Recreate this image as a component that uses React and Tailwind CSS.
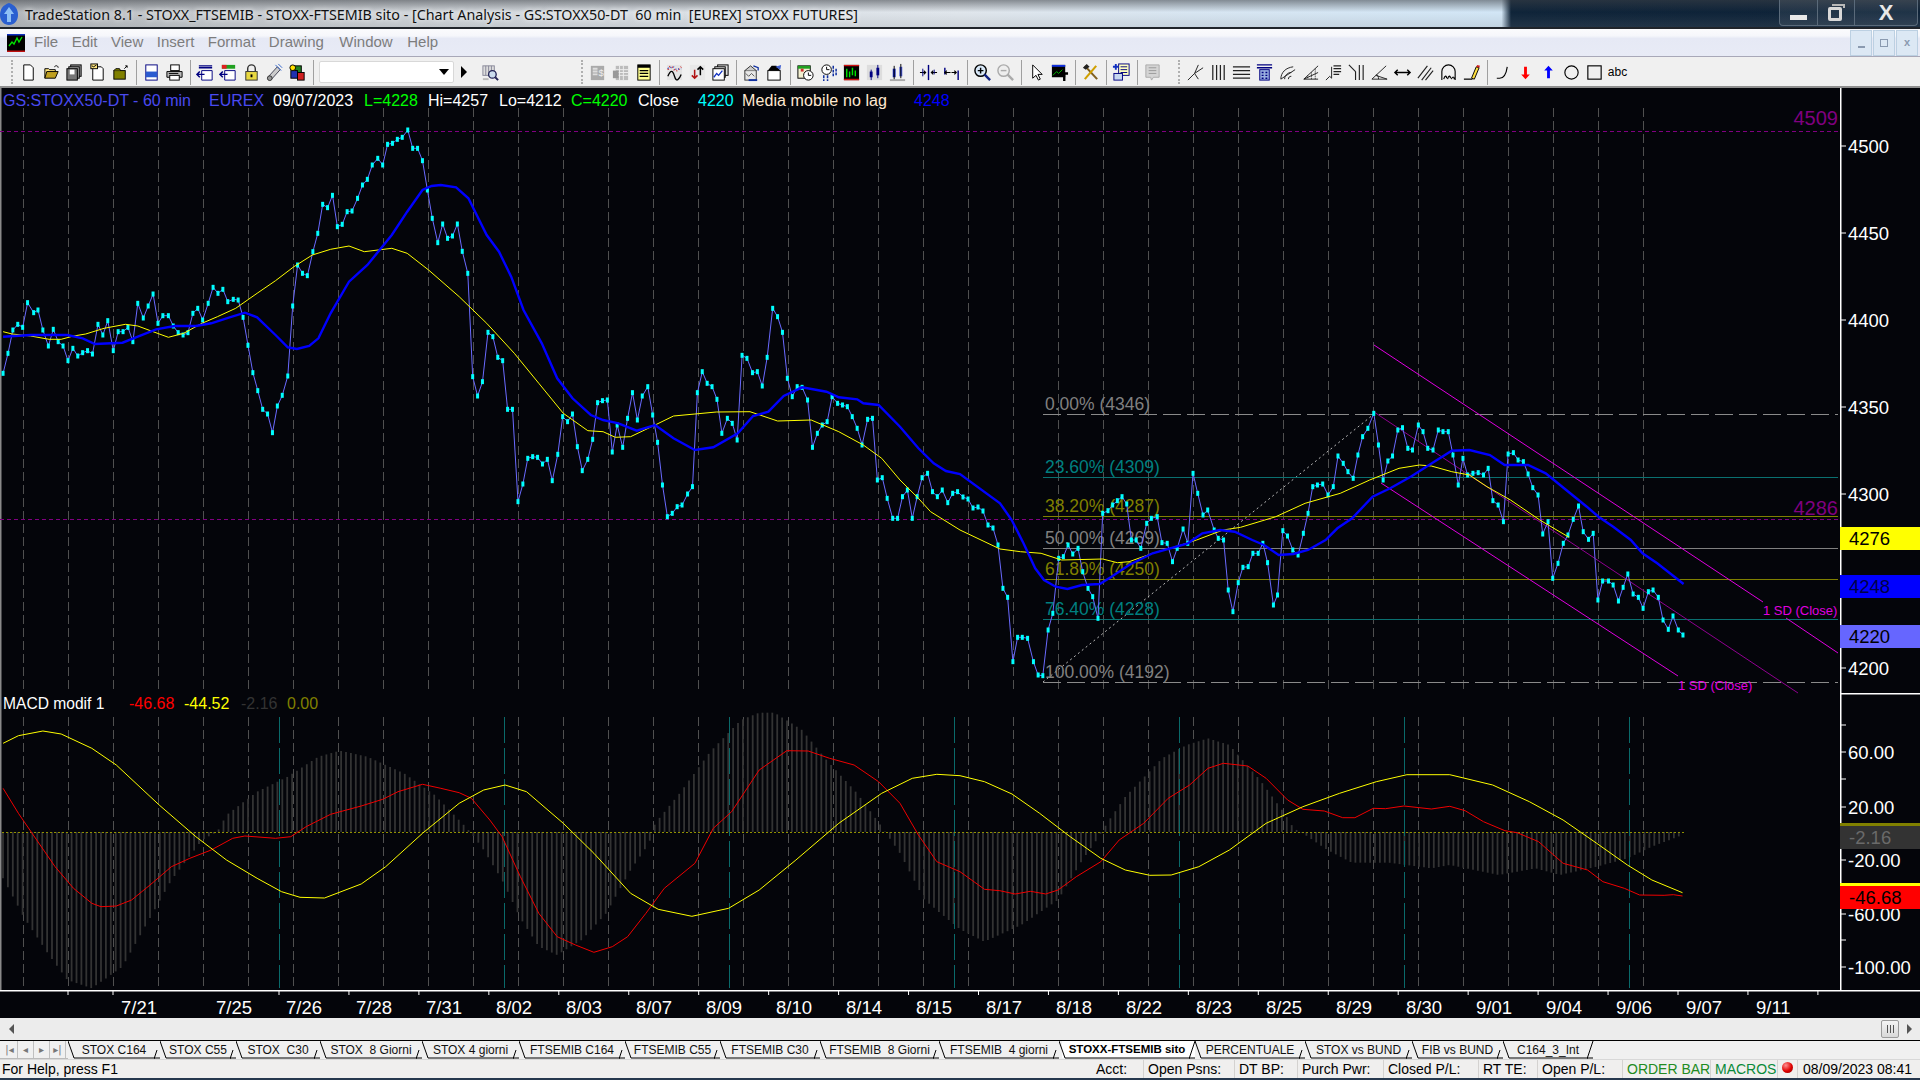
import React from "react";

const parse = (s, f) => s.trim().split(/\s+/).map((p) => f(...p.split(",").map(Number)));
const z10 = (x, y) => [x / 1.6333, 110 + y / 3];
const z7 = (x, y) => [1000 + x / 1.7043, 380 + y / 3];
const z8 = (x, y) => [x / 1.6333, 680 + y / 3];
const z9 = (x, y) => [960 + x / 1.6333, 680 + y / 3];
const raw = (x, y) => [x, y];
const pts = (a) => a.map((p) => p[0].toFixed(1) + "," + p[1].toFixed(1)).join(" ");

const price = [
  ...parse(`5,790 13,730 21,660 29,643 37,652 45,578 55,608 62,600 70,660 79,708 87,658 95,695 103,708 111,752 119,715 127,738 135,728 143,722 151,732 160,643 168,675 176,632 185,722 193,665 201,665 209,652 217,695 225,580 234,624 242,588 250,552 258,640 266,617 275,617 283,648 291,668 299,675 307,668 315,610 323,595 331,630 340,580 348,532 356,550 364,538 372,575 381,568 389,570 397,622 405,706 413,788 421,842 429,898 437,912 445,968 453,888 461,856 470,798 478,588 486,465 494,490 502,497 511,425 519,370 527,283 535,293 543,256 551,350 559,343 567,305 575,303 584,265 592,225 600,208 608,165 617,145 625,165 633,103 641,100 649,88 657,82 666,60 674,115 682,115 690,152 698,240 706,325 715,398 723,342 731,385 739,378 747,342 755,424 764,490 772,800 780,858 788,815 797,667 805,680 813,742 821,752 829,898 837,898 846,1175 854,1122 862,1045 870,1040 878,1042 886,1062 894,1048 902,1112 911,1033 919,920 927,935 935,912 943,1010 951,1082 960,1048 968,988 976,878 984,872 992,870 1000,1026 1008,945 1017,1012 1025,925 1033,848 1041,930 1049,858 1058,830 1066,915 1074,997 1082,1125 1090,1220 1098,1210 1106,1190 1114,1185 1123,1152 1131,1130 1139,848 1147,785 1155,820 1163,830 1171,868 1179,970 1188,925 1196,940 1204,990 1212,736 1220,745 1229,788 1237,785 1245,828 1253,742 1262,595 1270,620 1278,667 1286,805 1294,860 1302,830 1310,832 1319,870 1327,1012 1335,970 1343,945 1351,935 1359,860 1368,880 1376,885 1384,890 1392,920 1400,955 1408,1005 1417,928 1425,925 1433,1110 1441,1103 1449,1165 1458,1225 1466,1225 1474,1160 1482,1140 1490,1225 1498,1160 1506,1103 1515,1090 1523,1145 1531,1160 1539,1140 1548,1178 1556,1150 1564,1145`, z10),
  ...parse(`963,497 968,499 973,508 978,507 983,511 988,525 993,528 998,545`, raw),
  ...parse(`5,625 13,652 22,845 30,772 38,772 47,775 57,845 65,885 73,887 82,750 90,700 100,535 108,530 116,495 124,522 133,505 141,575 150,625 158,650 167,715 175,400 184,392 192,375 200,362 208,350 216,372 224,480 232,480 240,505 250,430 258,415 268,410 276,488 285,490 294,545 302,505 312,447 320,490 329,280 337,340 346,405 354,390 365,450 372,475 381,480 389,630 397,695 406,608 414,562 423,560 431,520 440,520 448,490 456,548 466,675 473,645 482,452 490,468 499,510 508,525 517,460 525,400 533,320 541,315 550,312 559,345 568,320 576,228 585,250 593,275 602,295 610,225 618,170 627,145 637,100 645,195 653,300 661,243 669,228 678,150 686,143 695,205 703,210 713,135 721,155 729,205 738,210 747,150 755,155 764,155 772,225 781,315 789,235 797,285 806,280 815,278 824,285 832,265 840,362 849,375 858,425 866,222 875,218 883,240 892,245 900,282 908,323 917,345 925,462 934,425 942,595 951,550 960,490 968,465 977,418 986,378 994,455 1003,478 1011,460 1019,660 1027,603 1037,603 1045,615 1054,663 1062,622 1070,582 1079,642 1088,652 1096,685 1105,635 1113,630 1122,652 1130,720 1139,748 1147,708 1156,750 1164,765`, z7),
];
const blue = [
  ...parse(`5,680 50,675 110,675 135,685 155,702 200,698 225,680 255,658 285,648 320,648 345,640 375,622 400,608 420,622 450,675 470,712 485,717 505,708 520,685 540,610 570,515 600,465 640,375 665,305 690,240 705,228 720,225 745,232 765,265 780,320 795,375 815,425 835,500 855,600 885,700 910,805 935,865 965,915 985,930 1010,940 1040,962 1070,945 1100,985 1135,1020 1165,1012 1205,970 1230,918 1255,905 1280,858 1310,832 1350,845 1370,862 1400,868 1410,880 1435,885 1470,950 1500,1015 1525,1060 1545,1083 1568,1092`, z10),
  ...parse(`0,370 20,420 40,490 60,565 75,600 95,620 115,627 140,615 170,612 190,590 220,555 260,520 320,490 345,460 375,450 400,455 430,480 450,495 475,525 500,522 525,510 555,480 575,445 600,415 635,350 665,325 700,290 740,245 770,212 800,210 835,225 860,255 900,255 930,280 965,330 1000,380 1020,410 1045,440 1075,480 1095,520 1120,550 1165,612`, z7),
];
const yellow = [
  ...parse(`5,665 20,672 50,678 80,688 100,688 120,678 140,672 170,655 205,643 225,648 250,665 275,682 300,670 330,640 355,620 385,595 420,550 450,512 480,470 510,435 540,418 570,408 595,425 640,415 665,430 700,480 750,560 795,640 840,730 880,820 920,910 960,962 985,965 1005,982 1030,980 1070,945 1100,918 1135,912 1170,906 1225,905 1270,933 1325,930 1370,965 1410,1005 1440,1045 1470,1110 1500,1165 1520,1205 1568,1260`, z10),
  ...parse(`0,507 35,515 70,520 105,540 175,537 200,548 220,545 260,520 300,500 335,480 380,450 410,442 470,410 520,370 580,340 630,300 680,265 715,255 735,258 770,275 800,285 830,320 870,360 920,420 970,472`, z7),
];
const macd = [
  ...parse(`5,325 30,400 60,480 90,560 120,625 150,670 165,680 190,678 215,660 245,615 280,560 310,535 345,510 380,475 400,468 450,475 475,470 500,440 540,403 590,378 625,358 650,335 690,313 720,325 750,338 770,355 800,420 820,470 850,590 880,700 910,770 940,795 970,817 1000,800 1025,770 1055,700 1085,625 1135,550 1165,445 1195,395 1240,270 1285,212 1320,213 1355,235 1395,255 1435,305 1470,370 1500,465 1530,545 1568,575`, z8),
  ...parse(`40,628 65,632 90,642 115,634 140,642 160,630 190,590 230,545 260,480 300,430 340,355 375,315 405,265 430,250 470,258 500,295 535,360 560,388 595,393 625,413 645,413 675,385 695,386 725,378 770,387 800,379 825,392 855,425 890,452 910,458 945,485 985,550 1025,570 1050,605 1085,625 1110,645 1150,646 1165,644 1180,648`, z9),
];
const signal = [
  ...parse(`5,190 30,167 70,153 100,162 150,205 190,255 260,375 320,470 370,540 420,595 460,635 490,652 530,654 590,612 630,560 690,460 750,370 790,330 825,315 860,335 920,430 970,520 1030,640 1075,688 1130,709 1190,685 1240,630 1300,540 1370,430 1440,340 1490,295 1530,283 1568,287`, z8),
  ...parse(`40,305 85,342 130,400 180,470 230,535 270,570 310,586 345,585 390,560 440,510 500,430 560,380 620,340 680,305 730,284 800,284 870,315 930,365 985,420 1040,490 1090,555 1130,600 1180,638`, z9),
];
const env = [
  ...parse(`5,595 40,715 80,825 110,900 150,925 200,860 240,730 280,600 330,480 355,455 370,405 420,335 470,290 520,230 555,212 600,230 660,280 710,345 755,430 770,460 790,510 820,600 850,715 880,800 910,825 950,780 990,700 1030,570 1060,490 1070,430 1110,340 1160,215 1210,120 1240,98 1265,98 1310,150 1350,240 1400,340 1440,440 1470,520 1510,660 1568,748`, z8),
  ...parse(`40,785 100,735 160,660 200,540 225,475 240,430 270,350 330,235 370,195 405,175 440,195 490,300 530,400 545,445 560,460 600,510 640,548 700,548 770,565 800,555 880,585 940,565 980,585 1040,560 1090,535 1130,500 1180,465`, z9),
];
const envAt = (x) => {
  for (let i = 1; i < env.length; i++) {
    if (x <= env[i][0]) {
      const [a, b] = env[i - 1], [c, d] = env[i];
      return b + ((d - b) * (x - a)) / (c - a);
    }
  }
  return 832;
};
const bars = [];
for (let x = 3; x <= 1682; x += 4.9) bars.push([x, envAt(x)]);

const grid = [];
for (let k = 0; k <= 36; k++) grid.push(23 + 45 * k);
const teal = [279, 504, 729, 954, 1179, 1404, 1629];
const ticks = [68, 113];
for (let k = 0; k <= 22; k++) ticks.push(279 + 69.95 * k);
const dates = [["7/21",121],["7/25",216],["7/26",286],["7/28",356],["7/31",426],["8/02",496],["8/03",566],["8/07",636],["8/09",706],["8/10",776],["8/14",846],["8/15",916],["8/17",986],["8/18",1056],["8/22",1126],["8/23",1196],["8/25",1266],["8/29",1336],["8/30",1406],["9/01",1476],["9/04",1546],["9/06",1616],["9/07",1686],["9/11",1756]];
const priceAxis = [["4500",146],["4450",233],["4400",320],["4350",407],["4300",494],["4250",582],["4200",668]];
const macdAxis = [["60.00",752],["20.00",807],["-20.00",860],["-60.00",914],["-100.00",967]];
const fibs = [
  ["0.00% (4346)", 414, "#808080", "#8a8a8a", true],
  ["23.60% (4309)", 477, "#008080", "#0a7070", false],
  ["38.20% (4287)", 516, "#808000", "#808000", false],
  ["50.00% (4269)", 548, "#808080", "#808080", false],
  ["61.80% (4250)", 579, "#808000", "#808000", false],
  ["76.40% (4228)", 619, "#008080", "#0a7070", false],
  ["100.00% (4192)", 682, "#808080", "#8a8a8a", true],
];

function Chart() {
  return (
    <svg viewBox="0 88 1920 930" className="block w-full h-full font-['Liberation_Sans',Arial,sans-serif]">
      <rect x="0" y="88" width="1920" height="930" fill="#04050a" />
      <rect x="0" y="88" width="1.5" height="902" fill="#8a8a8a" />
      {grid.map((x) => (
        <g key={x} stroke="#505050" strokeWidth="1" strokeDasharray="9 4">
          <line x1={x + 0.5} y1="108" x2={x + 0.5} y2="690" />
          <line x1={x + 0.5} y1="717" x2={x + 0.5} y2="988" />
        </g>
      ))}
      <line x1="0" x2="1838" y1="131.5" y2="131.5" stroke="#800080" strokeDasharray="4 3" />
      <line x1="0" x2="1838" y1="519.5" y2="519.5" stroke="#800080" strokeDasharray="4 3" />
      <text x="1838" y="125" textAnchor="end" fontSize="20" fill="#800080">4509</text>
      <text x="1838" y="515" textAnchor="end" fontSize="20" fill="#800080">4286</text>

      <line x1="1043" y1="682" x2="1374" y2="414" stroke="#bbb" strokeWidth="1" strokeDasharray="2 3" />
      {fibs.map(([t, y, c, lc, dash]) => (
        <g key={t}>
          <line x1="1043" x2="1838" y1={y + 0.5} y2={y + 0.5} stroke={lc} strokeWidth="1.2" strokeDasharray={dash ? "18 6" : undefined} />
          <text x="1045" y={y - 4} fontSize="17.5" fill={c}>{t}</text>
        </g>
      ))}

      <polyline points="1374,345 1763,602" fill="none" stroke="#e000e0" strokeWidth="1" />
      <polyline points="1786,618 1838,653" fill="none" stroke="#e000e0" strokeWidth="1" />
      <polyline points="1381,483 1678,676" fill="none" stroke="#e000e0" strokeWidth="1" />
      <polyline points="1374,412 1798,693" fill="none" stroke="#900090" strokeWidth="1" />
      <text x="1763" y="615" fontSize="13" fill="#e000e0">1 SD (Close)</text>
      <text x="1678" y="690" fontSize="13" fill="#e000e0">1 SD (Close)</text>

      <polyline points={pts(price)} fill="none" stroke="#6a6aff" strokeWidth="1" />
      {price.map(([x, y], i) => (
        <rect key={i} x={x - 1.5} y={y - 2.5} width="3" height="5" fill="#00ffff" />
      ))}
      <polyline points={pts(yellow)} fill="none" stroke="#ffff00" strokeWidth="1" />
      <polyline points={pts(blue)} fill="none" stroke="#0000ff" strokeWidth="2.4" />

      <g fontSize="16">
        <text x="3" y="106" fontSize="16" fill="#4a4af0">GS:STOXX50-DT - 60 min</text>
        <text x="209" y="106" fill="#4a4af0">EUREX</text>
        <text x="273" y="106" fill="#fff">09/07/2023</text>
        <text x="364" y="106" fill="#00ff00">L=4228</text>
        <text x="428" y="106" fill="#fff">Hi=4257</text>
        <text x="499" y="106" fill="#fff">Lo=4212</text>
        <text x="571" y="106" fill="#00ff00">C=4220</text>
        <text x="638" y="106" fill="#fff">Close</text>
        <text x="698" y="106" fill="#00ffff">4220</text>
        <text x="742" y="106" fill="#ffe8d0" textLength="145">Media mobile no lag</text>
        <text x="914" y="106" fill="#0000ff">4248</text>
      </g>

      <g>
        <text x="3" y="709" fontSize="15.6" fill="#fff">MACD modif 1</text>
        <text x="129" y="709" fontSize="16" fill="#ff0000">-46.68</text>
        <text x="184" y="709" fontSize="16" fill="#ffff00">-44.52</text>
        <text x="241" y="709" fontSize="16" fill="#333">-2.16</text>
        <text x="287" y="709" fontSize="16" fill="#808000">0.00</text>
      </g>

      {bars.map(([x, y], i) => (
        <line key={i} x1={x} x2={x} y1="832" y2={y} stroke="#333" strokeWidth="1.8" />
      ))}
      {teal.map((x) => (
        <line key={x} x1={x + 0.5} x2={x + 0.5} y1="717" y2="988" stroke="#0a6a6a" strokeWidth="1" strokeDasharray="26 5" />
      ))}
      <line x1="2" x2="1684" y1="832.5" y2="832.5" stroke="#909000" strokeWidth="1" strokeDasharray="2 2" />
      <polyline points={pts(macd)} fill="none" stroke="#f00000" strokeWidth="1" />
      <polyline points={pts(signal)} fill="none" stroke="#ffff00" strokeWidth="1" />

      <rect x="1840" y="88" width="1.5" height="902" fill="#fff" />
      <rect x="1840" y="693" width="80" height="1.5" fill="#fff" />
      <rect x="0" y="990" width="1920" height="1.5" fill="#fff" />
      {ticks.map((x) => (
        <line key={x} x1={x} x2={x} y1="990" y2="995" stroke="#fff" />
      ))}
      <g fontSize="18.5" fill="#fff">
        {dates.map(([t, x]) => (
          <text key={t} x={x} y="1014">{t}</text>
        ))}
        {priceAxis.map(([t, y]) => (
          <g key={t}>
            <line x1="1841" x2="1846" y1={y} y2={y} stroke="#fff" />
            <text x="1848" y={y + 6.5}>{t}</text>
          </g>
        ))}
        {macdAxis.map(([t, y]) => (
          <g key={t}>
            <line x1="1841" x2="1846" y1={y} y2={y} stroke="#fff" />
            <text x="1848" y={y + 6.5}>{t}</text>
          </g>
        ))}
      </g>
      {[725, 779, 833, 887, 940].map((y) => (
        <line key={y} x1="1841" x2="1846" y1={y} y2={y} stroke="#fff" />
      ))}
      <g fontSize="18.5">
        <rect x="1840" y="527" width="80" height="23" fill="#ffff00" />
        <text x="1849" y="545" fill="#000">4276</text>
        <rect x="1840" y="575" width="80" height="23" fill="#0000ff" />
        <text x="1849" y="593" fill="#000048">4248</text>
        <rect x="1840" y="625" width="80" height="23" fill="#6666ff" />
        <text x="1849" y="643" fill="#000">4220</text>
        <rect x="1840" y="823" width="80" height="3" fill="#808000" />
        <rect x="1840" y="826" width="80" height="23" fill="#333" />
        <text x="1849" y="844" fill="#6a6a6a">-2.16</text>
        <rect x="1840" y="883" width="80" height="3" fill="#ffff00" />
        <rect x="1840" y="886" width="80" height="23" fill="#ff0000" />
        <text x="1849" y="904" fill="#000">-46.68</text>
      </g>
    </svg>
  );
}

const icons = {
  newdoc: <path d="M5 2h7l3 3v13H5z" fill="#fff" stroke="#000" />,
  open: <><path d="M3 16V6h4l1 1h6v2" fill="#ffe680" stroke="#000" /><path d="M3 16l2-7h12l-3 7z" fill="#c0a020" stroke="#000" /><path d="M13 4c2-2 4-1 4 1" fill="none" stroke="#000" /></>,
  saveall: <><rect x="6" y="2" width="11" height="12" fill="#999" stroke="#000" /><rect x="4" y="4" width="11" height="12" fill="#aaa" stroke="#000" /><rect x="2" y="6" width="11" height="12" fill="#777" stroke="#000" /><rect x="5" y="7" width="5" height="5" fill="#fff" /></>,
  note: <><path d="M5 4h9l2 2v12H5z" fill="#fff" stroke="#000" /><rect x="3" y="1" width="7" height="5" fill="#ffe680" stroke="#000" /><path d="M4 3l2 1 3-2" fill="none" stroke="#000" /></>,
  oliveBox: <><rect x="3" y="8" width="12" height="9" fill="#808000" stroke="#000" /><path d="M3 8l2-2h4l1 2" fill="#808000" stroke="#000" /><path d="M14 6l3-3m0 2V3h-2" fill="none" stroke="#000" /></>,
  page: <><rect x="4" y="2" width="12" height="16" fill="#fff" stroke="#000080" /><rect x="4" y="9" width="12" height="6" fill="#2a5ad0" /></>,
  printer: <><rect x="6" y="2" width="9" height="6" fill="#fff" stroke="#000" /><path d="M2 9h16v6H2z" fill="#bbb" stroke="#000" /><rect x="5" y="13" width="10" height="5" fill="#fff" stroke="#000" /><path d="M4 11h10" stroke="#000" /></>,
  winBack: <><path d="M3 3h14M3 5h14" stroke="#000080" strokeWidth="1.5" /><path d="M6 8h11v10H6z" fill="#fff" stroke="#000080" /><path d="M9 12H2m2-3l-3 3 3 3" fill="none" stroke="#000080" strokeWidth="1.5" /></>,
  winBack2: <><rect x="3" y="2" width="14" height="4" fill="#20a020" /><rect x="3" y="2" width="5" height="4" fill="#e02020" /><path d="M6 8h11v10H6z" fill="#fff" stroke="#000080" /><path d="M9 12H2m2-3l-3 3 3 3" fill="none" stroke="#000080" strokeWidth="1.5" /></>,
  lock: <><path d="M6 9V6a4 4 0 018 0v3" fill="none" stroke="#333" strokeWidth="1.5" /><rect x="4" y="9" width="12" height="9" fill="#e8d840" stroke="#333" /><rect x="9" y="12" width="2" height="3" fill="#000" /></>,
  wand: <><path d="M3 15L13 4l3 3L7 17z" fill="#ccc" stroke="#445" /><path d="M11 2l6 6M14 1l4 4" stroke="#36c" /><circle cx="5" cy="16" r="2.5" fill="#999" stroke="#333" /></>,
  cubes: <><rect x="7" y="3" width="7" height="7" fill="#208020" stroke="#000" /><rect x="3" y="8" width="7" height="8" fill="#2030b0" stroke="#000" /><rect x="10" y="10" width="7" height="8" fill="#d02020" stroke="#000" /><circle cx="5" cy="5" r="3" fill="#ffe000" stroke="#000" /></>,
  magGrid: <><rect x="2" y="3" width="12" height="10" fill="#ddd" stroke="#889" /><path d="M5 3v10M8 3v10M11 3v10" stroke="#889" /><circle cx="12" cy="12" r="4" fill="#cde" stroke="#225" strokeWidth="1.4" /><path d="M15 15l3 3" stroke="#225" strokeWidth="2" /><path d="M2 16h6v2H2z" fill="#bbb" /></>,
  dollar: <><path d="M3 3h14v15H3z" fill="#aaa" /><path d="M5 6h5M5 9h5M5 12h5" stroke="#ddd" strokeWidth="2" /><text x="11" y="14" fontSize="10" fill="#eee" fontFamily="Liberation Sans">$</text></>,
  grayTable: <><rect x="5" y="3" width="13" height="15" fill="#bbb" /><path d="M5 7h13M5 10h13M5 13h13M9 3v15M13 3v15" stroke="#eee" /><rect x="2" y="8" width="6" height="8" fill="#999" /></>,
  yellowTable: <><rect x="4" y="2" width="13" height="16" fill="#ffff90" stroke="#000" /><rect x="4" y="2" width="13" height="3" fill="#000" /><path d="M6 8h9M6 11h9M6 14h9" stroke="#000" strokeWidth="1.4" /></>,
  wave: <><rect x="2" y="2" width="16" height="16" fill="#e4e4e4" /><path d="M3 14c3-7 5-7 7 0s5 3 7-2" fill="none" stroke="#000" strokeWidth="1.4" /><path d="M3 7c2-4 4-4 6-1s4 3 8-2" fill="none" stroke="#d03030" strokeDasharray="1 2" strokeWidth="2" /><path d="M3 5c2 2 5-3 7 0s4 1 7 1" fill="none" stroke="#3050d0" strokeDasharray="1 2" strokeWidth="1.5" /></>,
  arrowsRB: <><rect x="2" y="2" width="16" height="16" fill="#e8e8e8" /><path d="M7 7v9m-3-3l3 3 3-3" fill="none" stroke="#b01010" strokeWidth="1.6" /><path d="M13 13V4m-3 3l3-3 3 3" fill="none" stroke="#000" strokeWidth="1.6" /></>,
  stackChart: <><rect x="7" y="2" width="11" height="11" fill="#ddd" stroke="#000" /><rect x="4" y="4" width="11" height="11" fill="#ddd" stroke="#000" /><rect x="2" y="6" width="12" height="12" fill="#fff" stroke="#000" /><path d="M3 15l3-4 2 2 4-5" fill="none" stroke="#1030c0" strokeWidth="1.4" /></>,
  winArrow: <><rect x="3" y="8" width="12" height="10" fill="#e8e8e8" stroke="#333" /><path d="M3 8l6-5 6 5" fill="#ccc" stroke="#333" /><path d="M4 11l3 3 3-3 3 3" fill="none" stroke="#555" /><path d="M12 3l5 2v3" fill="none" stroke="#1030a0" strokeWidth="1.4" /><path d="M7 18h9" stroke="#1030a0" strokeWidth="2" /></>,
  boxTop: <><rect x="3" y="8" width="13" height="10" fill="#fff" stroke="#000" /><path d="M3 8l4-5h5l4 5z" fill="#000" /><path d="M11 4l6-2-1 5" fill="#4060d0" /></>,
  calClock: <><rect x="2" y="3" width="13" height="13" fill="#f4f0d0" stroke="#000" /><rect x="2" y="3" width="13" height="3" fill="#20a020" /><rect x="5" y="6" width="3" height="3" fill="#d03030" /><circle cx="13" cy="13" r="5" fill="#fff" stroke="#000" /><path d="M13 10v3h3" fill="none" stroke="#000" /></>,
  clockBars: <><circle cx="8" cy="7" r="5" fill="#fff" stroke="#000" /><path d="M8 4v3h3" fill="none" stroke="#000" /><path d="M15 3v12M18 6v8M5 13v6M9 13v6" stroke="#1030a0" strokeWidth="1.6" strokeDasharray="3 1" /></>,
  blackGreen: <><rect x="2" y="2" width="16" height="16" fill="#000" /><path d="M5 6v9M8 9v6M11 5v8M14 8v6" stroke="#00e000" strokeWidth="1.5" /><rect x="2" y="2" width="16" height="1.4" fill="#d01010" /><rect x="2" y="16.6" width="16" height="1.6" fill="#d01010" /></>,
  candlesDark: <><rect x="2" y="2" width="16" height="16" fill="#ddd" /><rect x="5" y="9" width="3" height="6" fill="#000080" /><path d="M6.5 7v11" stroke="#000080" /><rect x="12" y="5" width="3" height="8" fill="#000080" /><path d="M13.5 2v14" stroke="#000080" /></>,
  candlesBlue: <><path d="M2 18h16" stroke="#aaa" strokeWidth="2" /><rect x="5" y="6" width="3" height="9" fill="#1020b0" /><path d="M6.5 3v14" stroke="#000" /><rect x="12" y="4" width="3" height="10" fill="#4050d0" /><path d="M13.5 1v15" stroke="#000" /></>,
  barsIn: <><path d="M10 2v16" stroke="#000080" strokeWidth="1.5" /><path d="M1 10h6m-2-2l2 2-2 2M19 10h-6m2-2l-2 2 2 2" fill="none" stroke="#000" strokeWidth="1.2" /><path d="M4 6v8M16 7v5" stroke="#000080" /></>,
  barsOut: <><path d="M3 5v7M17 8v10" stroke="#000080" strokeWidth="1.5" /><path d="M3 10H9m-4-2L3 10l2 2M15 10H10m3-2l2 2-2 2" fill="none" stroke="#000" strokeWidth="1.2" /></>,
  zoomIn: <><circle cx="8" cy="8" r="6" fill="#d8e8f8" stroke="#000" strokeWidth="1.5" /><path d="M5 8h6M8 5v6" stroke="#000" strokeWidth="1.5" /><path d="M12 12l6 6" stroke="#102080" strokeWidth="2.5" /></>,
  zoomOut: <><circle cx="8" cy="8" r="6" fill="#eee" stroke="#aaa" strokeWidth="1.5" /><path d="M5 8h6" stroke="#aaa" strokeWidth="1.5" /><path d="M12 12l6 6" stroke="#aaa" strokeWidth="2.5" /></>,
  cursor: <path d="M6 2v14l3.5-3 2.5 5 2-1-2.5-5H16z" fill="#fff" stroke="#000" />,
  chartT: <><rect x="2" y="2" width="14" height="13" fill="#000" /><rect x="2" y="2" width="14" height="2" fill="#1030e0" /><path d="M3 13l4-4 2 2 4-4" fill="none" stroke="#00c000" /><path d="M11 11h8M15 11v8" stroke="#000" strokeWidth="2.5" /></>,
  tools: <><path d="M4 3l13 14" stroke="#806020" strokeWidth="2.2" /><path d="M16 3L4 17" stroke="#d0a000" strokeWidth="2.2" /><path d="M2 5l4-4 3 3-4 3z" fill="#222" /></>,
  plusDoc: <><rect x="7" y="1" width="11" height="12" fill="#ffffc0" stroke="#000080" /><path d="M9 4h7M9 7h7M9 10h7" stroke="#000080" /><rect x="2" y="11" width="9" height="7" fill="#c8d8f0" stroke="#000080" /><path d="M1 4h6M4 1v6" stroke="#1030c0" strokeWidth="2" /></>,
  grayNote: <><path d="M3 2h14v13h-6l-2 3-1-3H3z" fill="#d4d4d4" stroke="#aaa" /><path d="M6 5h8M6 8h8M6 11h8" stroke="#999" /></>,
  fork: <path d="M2 18l7-7L13 2M9 11l9-6M9 11l4 6" fill="none" stroke="#222" />,
  vlines: <path d="M4 2v16M8 2v16M12 2v16M16 2v16" stroke="#222" strokeWidth="1.3" />,
  hlines: <path d="M1 4h18M1 8h18M1 12h18M1 16h18" stroke="#222" strokeWidth="1.3" />,
  calc: <><path d="M2 2h16M2 5h16" stroke="#000080" strokeWidth="1.5" /><rect x="5" y="7" width="10" height="11" fill="#9ab0e0" stroke="#000080" /><path d="M7 10h2M11 10h2M7 13h2M11 13h2M7 16h2M11 16h2" stroke="#000080" strokeWidth="1.5" /></>,
  arcs: <path d="M3 17c0-7 5-12 13-13M7 17c0-4 3-7 7-7M11 17c0-2 1-3 3-3M3 17L18 7" fill="none" stroke="#222" />,
  fan: <><path d="M3 17L18 3M3 17L18 10M3 17h15" fill="none" stroke="#222" /><path d="M7 13v4M11 10v7M15 6v11" stroke="#222" strokeDasharray="1 1" /></>,
  steps: <><path d="M2 18l4-4 2 2V4" fill="none" stroke="#222" /><path d="M10 3h8M10 6h8M10 9h8M10 12h6" stroke="#222" strokeWidth="1.3" /></>,
  angleLines: <path d="M2 2l7 7M9 9v9M13 2v16M17 2v16" fill="none" stroke="#222" strokeWidth="1.2" />,
  wedge: <><path d="M2 17L17 3M2 17h16M6 13l12 4" fill="none" stroke="#222" /><path d="M9 17c0-3-1-4-2-5" fill="none" stroke="#222" /></>,
  dblArrow: <path d="M2 10h16M5 7l-3 3 3 3M15 7l3 3-3 3" fill="none" stroke="#000" strokeWidth="1.5" />,
  slashes: <path d="M2 16L12 3M6 18L16 5M10 18l8-10" fill="none" stroke="#222" strokeWidth="1.2" />,
  dome: <path d="M3 18V9a7 7 0 0114 0v9M5 17c1-4 3-4 3-1M9 17c1-4 3-4 3-1M13 17c1-3 3-3 3 0" fill="none" stroke="#000" strokeWidth="1.2" />,
  pencil: <><path d="M2 17h9" stroke="#000" strokeWidth="1.3" /><path d="M10 16L15 4l3 1-5 12z" fill="#ffe040" stroke="#000" /><path d="M15 4l1-2 3 1-1 2z" fill="#d02020" /></>,
  curve: <path d="M4 16h3c4 0 7-5 8-12" fill="none" stroke="#000" strokeWidth="1.2" />,
  redDown: <path d="M8.5 4h3v8h3l-4.5 5-4.5-5h3z" fill="#ff0000" />,
  blueUp: <path d="M8.5 16h3V8h3l-4.5-5-4.5 5h3z" fill="#0000ff" />,
  circle: <circle cx="10" cy="10" r="7" fill="none" stroke="#000" strokeWidth="1.2" />,
  square: <rect x="3" y="3" width="14" height="14" fill="none" stroke="#000" strokeWidth="1.2" />,
};

const Btn = ({ n }) => (
  <div className="w-[23px] h-[24px] flex items-center justify-center shrink-0">
    <svg viewBox="0 0 20 20" className="w-[19px] h-[19px]">{icons[n]}</svg>
  </div>
);
const Sep = () => <div className="w-px h-[25px] bg-[#a0a0a0] ml-[4px] mr-[3px] shrink-0" />;
const Grip = ({ c }) => <div className={"w-[3px] h-[24px] border-l-[2px] border-dotted border-[#b0b0b0] shrink-0 " + c} />;
const Group = ({ items }) => items.map((n) => <Btn key={n} n={n} />);

function Toolbar() {
  return (
    <div className="h-[31px] shrink-0 bg-[#f0f0f0] border-b-2 border-[#8f8f8f] pt-[1px] flex items-center">
      <Grip c="ml-[11px] mr-[3px]" />
      <Group items={["newdoc", "open", "saveall", "note", "oliveBox"]} />
      <Sep />
      <Group items={["page", "printer"]} />
      <Sep />
      <Group items={["winBack", "winBack2", "lock", "wand", "cubes"]} />
      <Sep />
      <div className="ml-[2px] w-[135px] h-[22px] bg-white border border-[#d8d8d8] rounded-[2px] flex items-center justify-end pr-[4px] shrink-0">
        <div className="w-0 h-0 border-l-[5px] border-r-[5px] border-t-[6px] border-l-transparent border-r-transparent border-t-black" />
      </div>
      <div className="w-[20px] flex justify-center shrink-0">
        <div className="w-0 h-0 border-t-[6px] border-b-[6px] border-l-[6px] border-t-transparent border-b-transparent border-l-black" />
      </div>
      <div className="ml-[5px]"><Btn n="magGrid" /></div>
      <Grip c="ml-[79px] mr-[2px]" />
      <Group items={["dollar", "grayTable", "yellowTable"]} />
      <Sep />
      <Group items={["wave", "arrowsRB", "stackChart"]} />
      <Sep />
      <Group items={["winArrow", "boxTop"]} />
      <Sep />
      <Group items={["calClock", "clockBars", "blackGreen", "candlesDark", "candlesBlue"]} />
      <Sep />
      <Group items={["barsIn", "barsOut"]} />
      <Sep />
      <Group items={["zoomIn", "zoomOut"]} />
      <Sep />
      <Group items={["cursor", "chartT"]} />
      <Sep />
      <Btn n="tools" />
      <Sep />
      <Btn n="plusDoc" />
      <Sep />
      <Btn n="grayNote" />
      <Grip c="ml-[14px] mr-[3px]" />
      <Group items={["fork", "vlines", "hlines", "calc", "arcs", "fan", "steps", "angleLines", "wedge", "dblArrow", "slashes", "dome", "pencil"]} />
      <Sep />
      <Group items={["curve", "redDown", "blueUp", "circle", "square"]} />
      <div className="w-[23px] text-center text-[12px] text-black font-['Liberation_Sans_Narrow','Liberation_Sans',sans-serif]">abc</div>
    </div>
  );
}

function TitleBar() {
  return (
    <div className="h-[29px] shrink-0 relative flex items-center border-b-2 border-[#20242a] bg-[linear-gradient(180deg,rgba(60,64,70,0.55)_0%,rgba(200,205,210,0)_45%,rgba(120,125,130,0.18)_100%),linear-gradient(90deg,#b4b8bc_0%,#c8ccd0_12%,#d8dde2_30%,#e0e6ec_50%,#d8e6f2_62%,#d2e6f6_78%,#d2e6f6_78.2%,#0f2439_78.7%,#0d2238_100%)]">
      <svg viewBox="0 0 18 22" className="w-[18px] h-[22px] shrink-0">
        <path d="M9 0c6 2 9 6 9 12 0 6-4 10-9 10S0 18 0 12C0 6 3 2 9 0z" fill="#2a5fd0" />
        <path d="M9 4l5 7h-3v8H7v-8H4z" fill="#8fc0f5" />
      </svg>
      <div className="ml-[7px] pt-[2px] text-[14.3px] text-[#101010] font-['Noto_Sans',sans-serif] whitespace-pre [text-shadow:0_0_5px_#ffffff]">
        TradeStation 8.1 - STOXX_FTSEMIB - STOXX-FTSEMIB sito - [Chart Analysis - GS:STOXX50-DT  60 min  [EUREX] STOXX FUTURES]
      </div>
      <div className="ml-auto mr-[2px] self-start h-[26px] w-[139px] flex border border-t-0 border-[#5a6a7a] rounded-b-[4px] bg-[#ffffff14]">
        <div className="w-[38px] flex items-end justify-center pb-[5px] border-r border-[#5a6a7a]">
          <div className="w-[17px] h-[5px] bg-[#e8e8e8]" />
        </div>
        <div className="w-[37px] flex items-center justify-center border-r border-[#5a6a7a]">
          <div className="relative w-[14px] h-[14px] border-[3px] border-[#d8d8d8] rounded-[2px] mt-[3px] mr-[3px]">
            <div className="absolute -top-[6px] left-[1px] w-[13px] h-[4px] border-t-[2px] border-r-[2px] border-[#b8b8b8]" />
          </div>
        </div>
        <div className="flex-1 flex items-center justify-center text-[22px] font-bold text-[#e8e8e8] font-['Liberation_Sans',sans-serif] leading-none">X</div>
      </div>
    </div>
  );
}

function MdiBtn({ children }) {
  return (
    <div className="w-[22px] h-[26px] flex items-center justify-center bg-[#dce8f4] border border-[#bcd0e2] text-[#8a9ab0] text-[11px] font-['Liberation_Sans',sans-serif]">
      {children}
    </div>
  );
}

const menu = [["File", ""], ["Edit", ""], ["View", ""], ["Insert", ""], ["Format", ""], ["Drawing", ""], ["Window", "ml-[2px]"], ["Help", "ml-[1px]"]];

function MenuBar() {
  return (
    <div className="h-[28px] shrink-0 flex items-center bg-[linear-gradient(180deg,#fbfbfd_0%,#f6f7fb_25%,#e6e9f5_35%,#e8ebf6_100%)] border-b border-[#a8a8b8] pl-[7px] pr-[2px]">
      <svg viewBox="0 0 18 18" className="w-[18px] h-[18px] shrink-0">
        <rect width="18" height="18" fill="#000" />
        <rect width="18" height="1.5" fill="#1030c0" />
        <rect y="16.5" width="18" height="1.5" fill="#c01010" />
        <path d="M2 12l3-4 2 2 3-6 2 4 3-5" fill="none" stroke="#00e000" strokeWidth="1.4" />
      </svg>
      <div className="ml-[9px] flex gap-[13.5px] text-[15px] text-[#7d7d7d] font-['Liberation_Sans',sans-serif]">
        {menu.map(([m, c]) => (
          <span key={m} className={c}>{m}</span>
        ))}
      </div>
      <div className="ml-auto flex gap-px">
        <MdiBtn><div className="w-[7px] h-[2px] bg-[#8a9ab0] mt-[8px]" /></MdiBtn>
        <MdiBtn><div className="w-[8px] h-[8px] border border-[#8a9ab0]" /></MdiBtn>
        <MdiBtn><span className="font-bold">x</span></MdiBtn>
      </div>
    </div>
  );
}

function ScrollBar() {
  return (
    <div className="h-[22px] shrink-0 bg-[#ececec] flex items-center">
      <div className="ml-[9px] w-0 h-0 border-t-[5px] border-b-[5px] border-r-[5px] border-t-transparent border-b-transparent border-r-[#555]" />
      <div className="ml-auto w-[18px] h-[18px] bg-[linear-gradient(180deg,#f4f4f4,#d8d8d8)] border border-[#9a9a9a] rounded-[2px] flex items-center justify-center gap-[2px]">
        <div className="w-px h-[8px] bg-[#555]" />
        <div className="w-px h-[8px] bg-[#555]" />
        <div className="w-px h-[8px] bg-[#555]" />
      </div>
      <div className="ml-[8px] mr-[8px] w-0 h-0 border-t-[5px] border-b-[5px] border-l-[5px] border-t-transparent border-b-transparent border-l-[#555]" />
    </div>
  );
}

const tabs = [
  ["STOX C164", "w-[92px]"],
  ["STOX C55", "w-[76px]"],
  ["STOX  C30", "w-[84px]"],
  ["STOX  8 Giorni", "w-[102px]"],
  ["STOX 4 giorni", "w-[97px]"],
  ["FTSEMIB C164", "w-[106px]"],
  ["FTSEMIB C55", "w-[95px]"],
  ["FTSEMIB C30", "w-[100px]"],
  ["FTSEMIB  8 Giorni", "w-[119px]"],
  ["FTSEMIB  4 giorni", "w-[120px]"],
  ["STOXX-FTSEMIB sito", "w-[136px]", true],
  ["PERCENTUALE", "w-[110px]"],
  ["STOX vs BUND", "w-[107px]"],
  ["FIB vs BUND", "w-[91px]"],
  ["C164_3_Int", "w-[90px]"],
];

function Tab({ label, w, active, last }) {
  return (
    <div className={"relative h-full shrink-0 flex items-center justify-center whitespace-pre " + w + (active ? " font-bold text-black text-[11.5px]" : " text-[#111]")}>
      <svg className="absolute inset-0 w-full h-full" preserveAspectRatio="none">
        {active && <rect x="3" y="0" width="100%" height="17" fill="#fff" />}
        <line x1="0" y1="0" x2="6" y2="17" stroke="#000" />
        <line x1="6" y1="17" x2="100%" y2="17" stroke="#000" />
      </svg>
      <svg viewBox="0 0 7 18" className={"absolute right-[-1px] top-0 w-[7px] h-full"}>
        <line x1="0" y1="18" x2={last || active ? "6" : "3"} y2={last || active ? "0" : "9"} stroke="#000" />
      </svg>
      <span className="relative">{label}</span>
    </div>
  );
}

function TabBar() {
  return (
    <div className="h-[19px] shrink-0 bg-[#f0f0f0] border-t border-black flex text-[12px] font-['Liberation_Sans',sans-serif]">
      <div className="flex h-full w-[68px] shrink-0 pl-[2px] border-b border-[#bbb]">
        {["|◂", "◂", "▸", "▸|"].map((g) => (
          <div key={g} className="w-[16px] h-full flex items-center justify-center border-r border-[#c0c0c0] text-[10px] text-[#777] font-['DejaVu_Sans',sans-serif]">{g}</div>
        ))}
      </div>
      {tabs.map(([t, w, a], i) => (
        <Tab key={t} label={t} w={w} active={a} last={i === tabs.length - 1} />
      ))}
    </div>
  );
}

const cell = "h-full flex items-center pl-[4px] border-l border-[#d4d2d0] shrink-0 whitespace-nowrap ";

function StatusBar() {
  return (
    <div className="h-[19px] shrink-0 bg-[#f0efee] flex items-center text-[14px] text-black font-['Liberation_Sans',sans-serif] border-t border-[#d8d8d8]">
      <div className="flex-1 pl-[2px]">For Help, press F1</div>
      <div className="h-full w-[47px] flex items-center shrink-0">Acct:</div>
      <div className={cell + "w-[91px]"}>Open Psns:</div>
      <div className={cell + "w-[63px]"}>DT BP:</div>
      <div className={cell + "w-[86px]"}>Purch Pwr:</div>
      <div className={cell + "w-[95px]"}>Closed P/L:</div>
      <div className={cell + "w-[59px]"}>RT TE:</div>
      <div className={cell + "w-[85px]"}>Open P/L:</div>
      <div className={cell + "w-[88px] text-[#228b22]"}>ORDER BAR</div>
      <div className={cell + "w-[67px] text-[#0a8a3a]"}>MACROS</div>
      <div className={cell + "w-[20px]"}>
        <div className="w-[11px] h-[11px] rounded-full bg-[radial-gradient(circle_at_35%_30%,#ff9090,#e00000_55%,#800000)] -mt-[4px]" />
      </div>
      <div className="h-full w-[123px] flex items-center pl-[5px] border-l border-[#d4d2d0] shrink-0 whitespace-nowrap">08/09/2023 08:41</div>
    </div>
  );
}

export default function App() {
  return (
    <div className="w-[1920px] h-[1080px] overflow-hidden flex flex-col bg-[#f0f0f0]">
      <TitleBar />
      <MenuBar />
      <Toolbar />
      <div className="h-[930px] shrink-0"><Chart /></div>
      <ScrollBar />
      <TabBar />
      <StatusBar />
      <div className="h-[2px] shrink-0 bg-[#26384e]" />
    </div>
  );
}
